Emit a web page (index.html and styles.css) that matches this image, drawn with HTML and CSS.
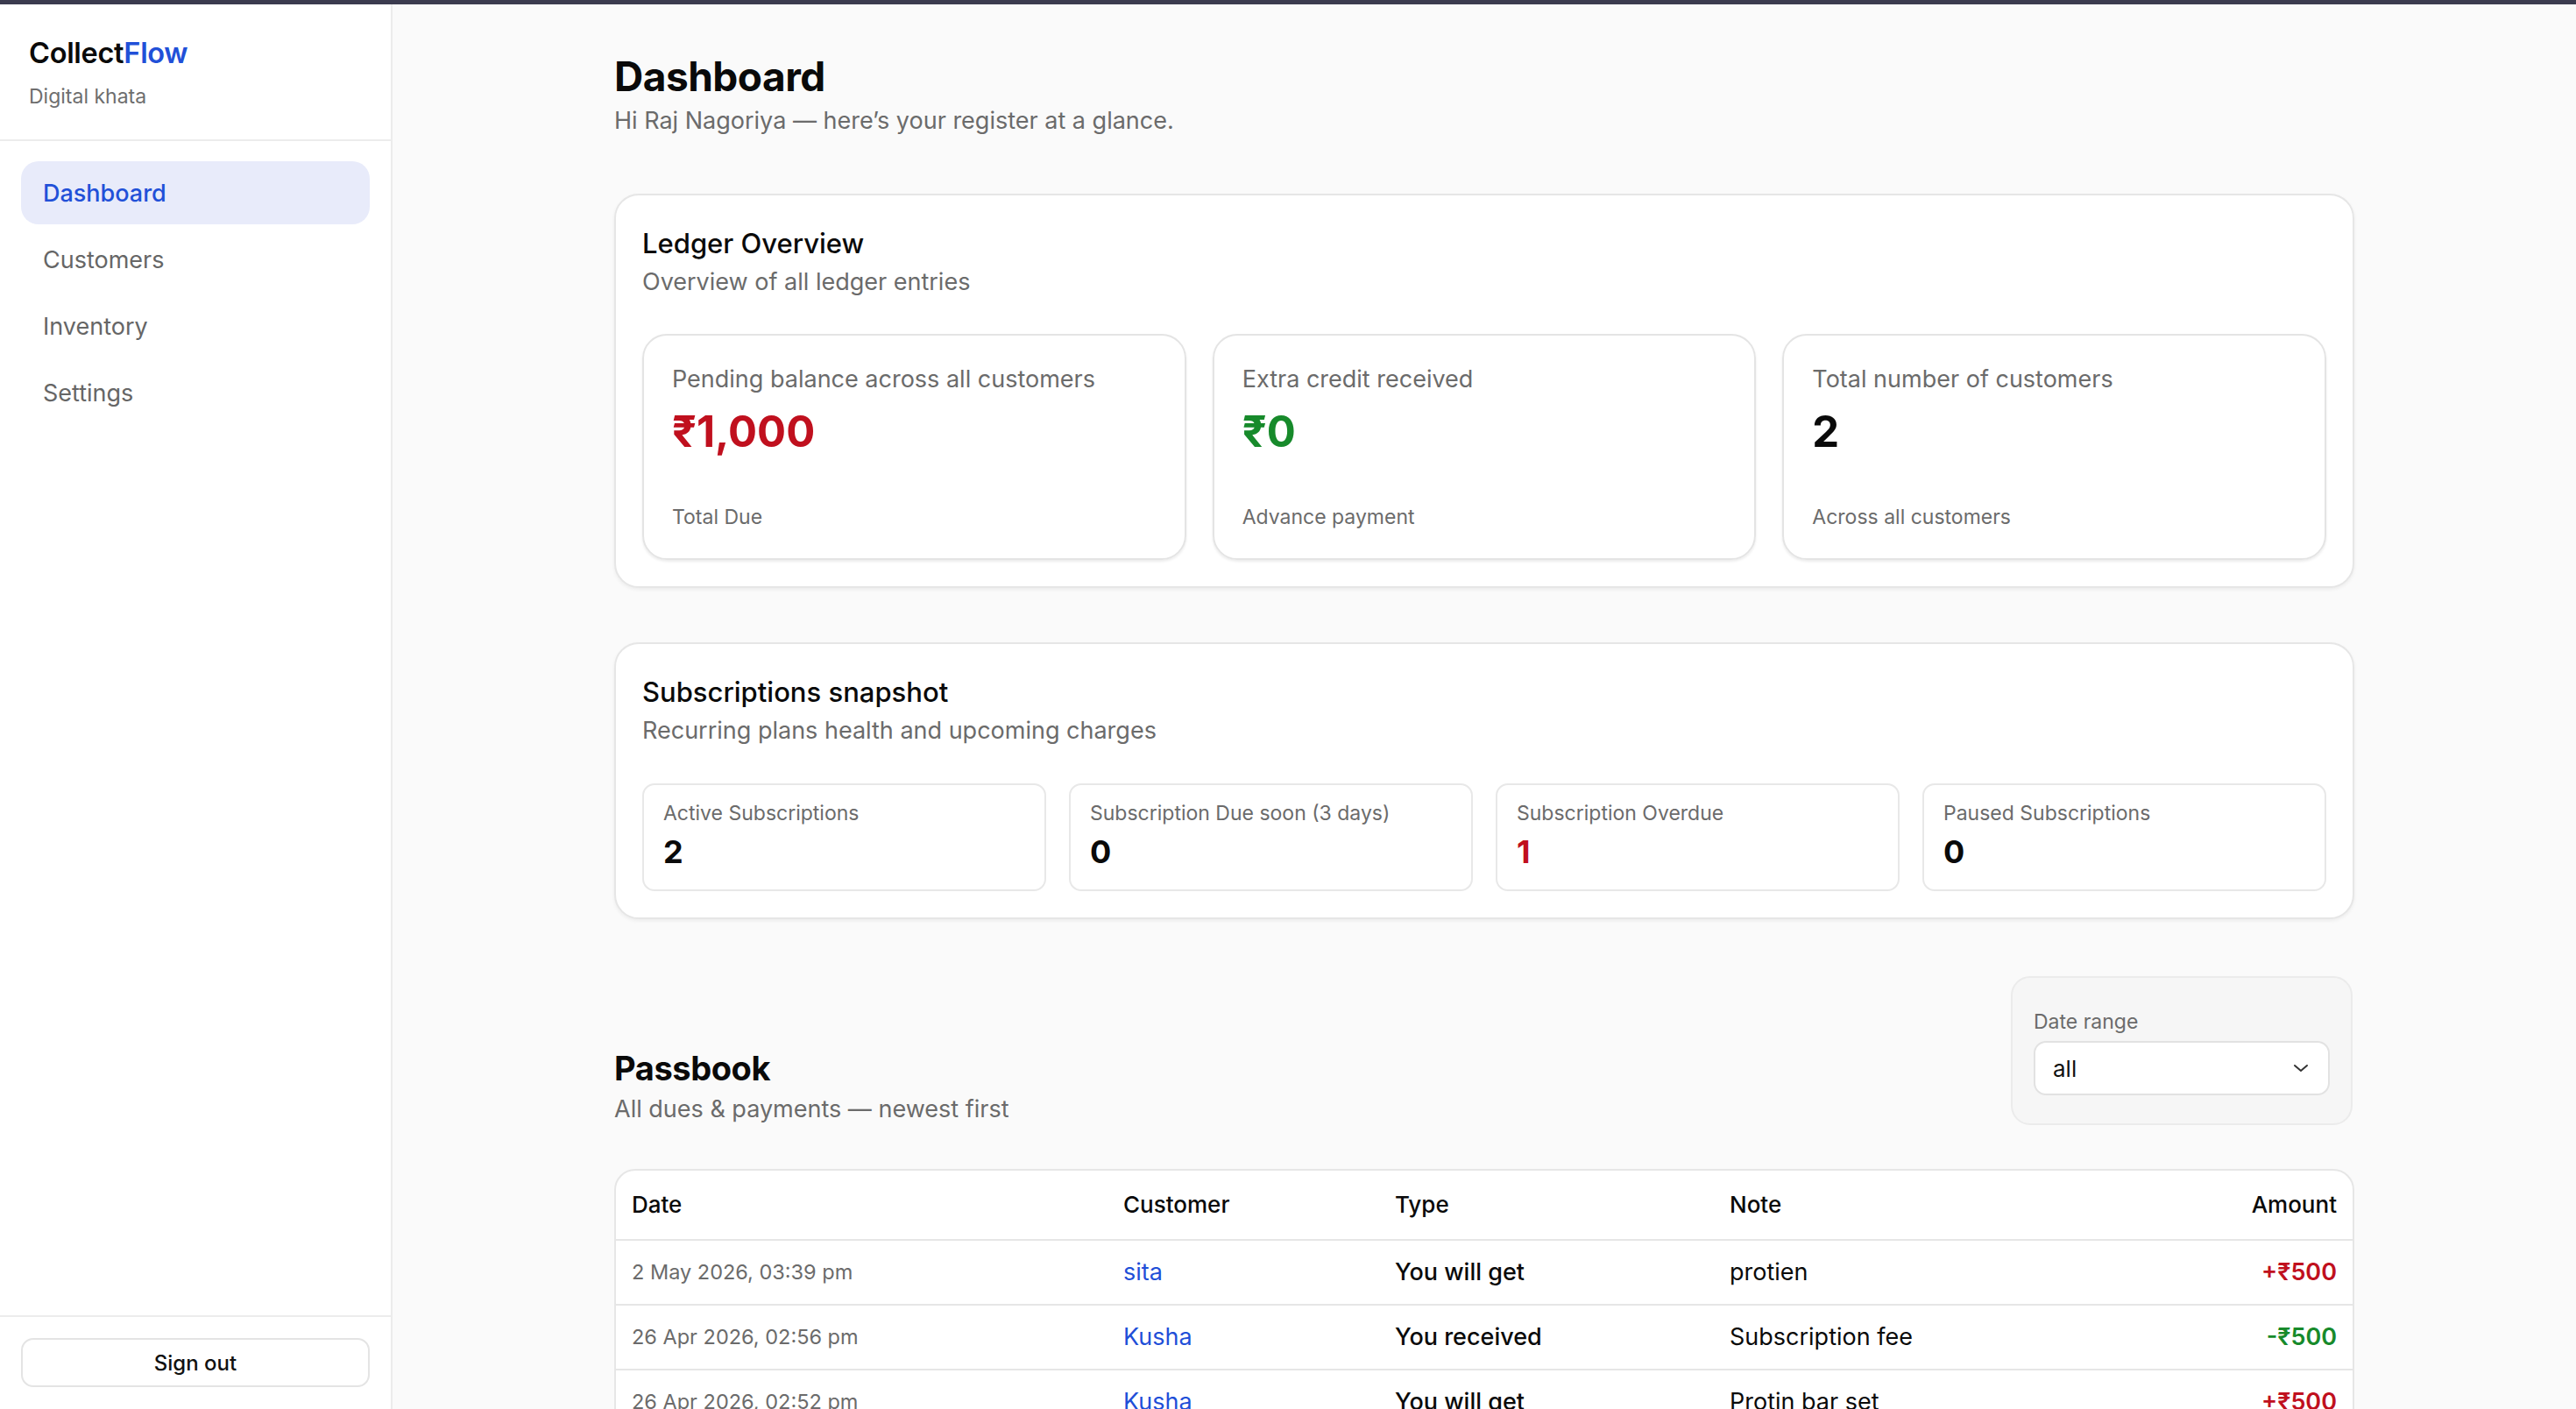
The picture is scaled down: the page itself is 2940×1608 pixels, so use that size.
FILE: index.html
```html
<!DOCTYPE html>
<html lang="en">
<head>
  <meta charset="UTF-8" />
  <meta name="viewport" content="width=device-width, initial-scale=1.0"/>
  <title>CollectFlow – Dashboard</title>
  <link rel="stylesheet" href="styles.css">
</head>
<body>
  <div class="topbar"></div>
  <div class="app">
    <aside class="sidebar">
      <div class="brand">
        <div class="brand-name">Collect<span>Flow</span></div>
        <div class="brand-sub">Digital khata</div>
      </div>
      <nav class="nav">
        <a class="nav-item active" href="#">Dashboard</a>
        <a class="nav-item" href="#">Customers</a>
        <a class="nav-item" href="#">Inventory</a>
        <a class="nav-item" href="#">Settings</a>
      </nav>
      <div class="sidebar-foot">
        <button class="signout">Sign out</button>
      </div>
    </aside>

    <main class="main">
      <div class="container">
        <header class="page-head">
          <h1>Dashboard</h1>
          <p>Hi Raj Nagoriya — here’s your register at a glance.</p>
        </header>

        <section class="panel">
          <h2>Ledger Overview</h2>
          <p class="panel-sub">Overview of all ledger entries</p>
          <div class="stats">
            <div class="stat">
              <div class="stat-label">Pending balance across all customers</div>
              <div class="stat-value red">₹1,000</div>
              <div class="stat-foot">Total Due</div>
            </div>
            <div class="stat">
              <div class="stat-label">Extra credit received</div>
              <div class="stat-value green">₹0</div>
              <div class="stat-foot">Advance payment</div>
            </div>
            <div class="stat">
              <div class="stat-label">Total number of customers</div>
              <div class="stat-value">2</div>
              <div class="stat-foot">Across all customers</div>
            </div>
          </div>
        </section>

        <section class="panel">
          <h2>Subscriptions snapshot</h2>
          <p class="panel-sub">Recurring plans health and upcoming charges</p>
          <div class="subs">
            <div class="sub">
              <div class="sub-label">Active Subscriptions</div>
              <div class="sub-value">2</div>
            </div>
            <div class="sub">
              <div class="sub-label">Subscription Due soon (3 days)</div>
              <div class="sub-value">0</div>
            </div>
            <div class="sub">
              <div class="sub-label">Subscription Overdue</div>
              <div class="sub-value red">1</div>
            </div>
            <div class="sub">
              <div class="sub-label">Paused Subscriptions</div>
              <div class="sub-value">0</div>
            </div>
          </div>
        </section>

        <div class="passbook-head">
          <div>
            <h2 class="section-title">Passbook</h2>
            <p class="section-sub">All dues &amp; payments — newest first</p>
          </div>
          <div class="filter">
            <label class="filter-label">Date range</label>
            <div class="select">
              <span>all</span>
              <svg width="18" height="10" viewBox="0 0 18 10" fill="none" stroke="#333" stroke-width="2" stroke-linecap="round" stroke-linejoin="round"><path d="M2 2l7 6 7-6"/></svg>
            </div>
          </div>
        </div>

        <div class="table-card">
          <table class="ledger">
            <colgroup>
              <col class="c-date"><col class="c-cust"><col class="c-type"><col><col class="c-amt">
            </colgroup>
            <thead>
              <tr><th>Date</th><th>Customer</th><th>Type</th><th>Note</th><th class="right">Amount</th></tr>
            </thead>
            <tbody>
              <tr>
                <td class="date">2 May 2026, 03:39 pm</td>
                <td><a href="#">sita</a></td>
                <td class="type">You will get</td>
                <td>protien</td>
                <td class="right amt red">+₹500</td>
              </tr>
              <tr>
                <td class="date">26 Apr 2026, 02:56 pm</td>
                <td><a href="#">Kusha</a></td>
                <td class="type">You received</td>
                <td>Subscription fee</td>
                <td class="right amt green">-₹500</td>
              </tr>
              <tr>
                <td class="date">26 Apr 2026, 02:52 pm</td>
                <td><a href="#">Kusha</a></td>
                <td class="type">You will get</td>
                <td>Protin bar set</td>
                <td class="right amt red">+₹500</td>
              </tr>
            </tbody>
          </table>
        </div>
      </div>
    </main>
  </div>
</body>
</html>
```

FILE: styles.css
```css
* {
  box-sizing: border-box;
}

html, body {
  margin: 0;
  height: 100%;
}

body {
  font-family: Inter, "Noto Sans", sans-serif;
  color: #0a0a0a;
  background: #fafafa;
  overflow: hidden;
}

.topbar {
  height: 5px;
  background: #3b3b4f;
}

.app {
  display: flex;
  height: calc(100vh - 5px);
}

/* sidebar */
.sidebar {
  width: 448px;
  flex-shrink: 0;
  background: #fff;
  border-right: 2px solid #ececec;
  display: flex;
  flex-direction: column;
}

.brand {
  padding: 36px 33px 34px;
  border-bottom: 2px solid #ececec;
}

.brand-name {
  font-size: 32.5px;
  line-height: 40px;
  font-weight: 600;
  letter-spacing: -0.3px;
}

.brand-name span {
  color: #2150d8;
}

.brand-sub {
  margin-top: 14px;
  font-size: 23px;
  line-height: 30px;
  color: #6e6e6e;
}

.nav {
  padding: 23px 24px;
  display: flex;
  flex-direction: column;
  gap: 4px;
}

.nav-item {
  display: flex;
  align-items: center;
  height: 72px;
  padding: 0 25px;
  border-radius: 20px;
  font-size: 27px;
  color: #666;
  text-decoration: none;
}

.nav-item.active {
  background: #e8ebfa;
  color: #2150d8;
  font-weight: 500;
}

.sidebar-foot {
  margin-top: auto;
  border-top: 2px solid #ececec;
  padding: 24px 24px 25px;
}

.signout {
  width: 100%;
  height: 56px;
  background: #fff;
  border: 2px solid #e4e4e4;
  border-radius: 14px;
  font-family: inherit;
  font-size: 24px;
  font-weight: 500;
  color: #111;
}

/* main */
.main {
  flex: 1;
  overflow: hidden;
}

.container {
  width: 1986px;
  margin: 0 auto;
  padding-top: 56px;
}

.page-head h1 {
  margin: 0;
  font-size: 46px;
  line-height: 52px;
  font-weight: 700;
  letter-spacing: -0.5px;
}

.page-head p {
  margin: 6px 0 0;
  font-size: 27px;
  line-height: 38px;
  color: #6b6b6b;
}

.panel {
  margin-top: 64px;
  background: #fff;
  border: 2px solid #e6e6e6;
  border-radius: 28px;
  box-shadow: 0 2px 4px rgba(0, 0, 0, 0.06);
  padding: 35px 30px 30px;
}

.panel + .panel {
  margin-top: 62px;
}

.panel h2 {
  margin: 0;
  font-size: 31px;
  line-height: 40px;
  font-weight: 500;
}

.panel-sub {
  margin: 5px 0 0;
  font-size: 27px;
  line-height: 38px;
  color: #6b6b6b;
}

.stats {
  margin-top: 40px;
  display: grid;
  grid-template-columns: repeat(3, 1fr);
  gap: 30px;
}

.stat {
  height: 258px;
  border: 2px solid #e4e4e4;
  border-radius: 28px;
  box-shadow: 0 2px 3px rgba(0, 0, 0, 0.08);
  padding: 32px 32px 32px;
  display: flex;
  flex-direction: column;
}

.stat-label {
  font-size: 27px;
  line-height: 36px;
  color: #6b6b6b;
}

.stat-value {
  margin-top: 14px;
  font-size: 49px;
  line-height: 56px;
  font-weight: 700;
}

.stat-foot {
  margin-top: auto;
  font-size: 23px;
  line-height: 30px;
  color: #6b6b6b;
}

.red {
  color: #c0101e;
}

.green {
  color: #178a2b;
}

.subs {
  margin-top: 41px;
  display: grid;
  grid-template-columns: repeat(4, 1fr);
  gap: 26px;
}

.sub {
  height: 123px;
  border: 2px solid #e8e8e8;
  border-radius: 14px;
  padding: 17px 22px 0;
}

.sub-label {
  font-size: 23px;
  line-height: 30px;
  color: #6b6b6b;
}

.sub-value {
  margin-top: 7px;
  font-size: 36px;
  line-height: 44px;
  font-weight: 700;
}

/* passbook */
.passbook-head {
  margin-top: 65px;
  display: flex;
  justify-content: space-between;
  align-items: flex-end;
}

.section-title {
  margin: 0;
  font-size: 38px;
  line-height: 46px;
  font-weight: 700;
  letter-spacing: -0.4px;
}

.section-sub {
  margin: 6px 0 0;
  font-size: 27px;
  line-height: 36px;
  color: #6b6b6b;
}

.filter {
  width: 390px;
  background: #f6f6f6;
  border: 2px solid #ebebeb;
  border-radius: 22px;
  padding: 35px 24px 32px;
  margin-right: 2px;
}

.filter-label {
  display: block;
  font-size: 23px;
  line-height: 30px;
  color: #6b6b6b;
}

.select {
  margin-top: 7px;
  height: 62px;
  background: #fff;
  border: 2px solid #e2e2e2;
  border-radius: 14px;
  padding: 0 22px 0 20px;
  display: flex;
  align-items: center;
  justify-content: space-between;
  font-size: 26px;
  color: #111;
}

.table-card {
  margin-top: 50px;
  background: #fff;
  border: 2px solid #e6e6e6;
  border-radius: 24px;
  overflow: hidden;
}

.ledger {
  width: 100%;
  border-collapse: collapse;
  table-layout: fixed;
}

.c-date { width: 561px; }
.c-cust { width: 310px; }
.c-type { width: 382px; }
.c-amt { width: 250px; }

.ledger th {
  text-align: left;
  font-size: 26px;
  line-height: 36px;
  font-weight: 500;
  padding: 21px 18px;
  border-bottom: 2px solid #e6e6e6;
}

.ledger td {
  font-size: 27px;
  line-height: 36px;
  padding: 18px 18px;
  border-bottom: 2px solid #e6e6e6;
}

.ledger .right {
  text-align: right;
}

.ledger td.date {
  font-size: 23.5px;
  color: #6b6b6b;
}

.ledger td.type {
  font-weight: 500;
}

.ledger td.amt {
  font-weight: 600;
}

.ledger a {
  color: #1f4fd8;
  text-decoration: none;
}
```
